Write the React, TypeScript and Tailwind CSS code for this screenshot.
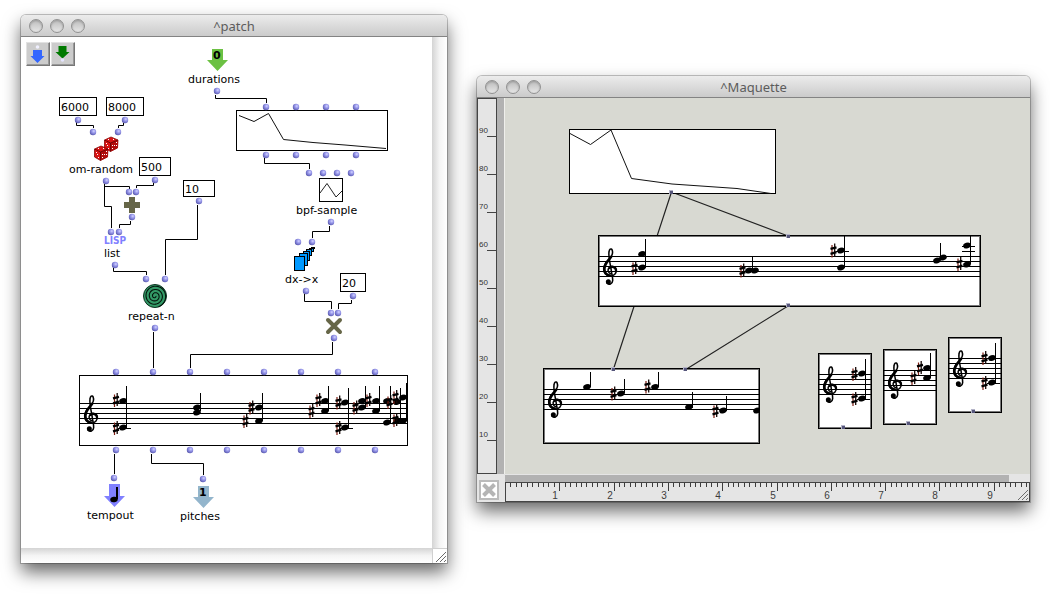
import React from "react";

type Point = [number, number];

/* ---------- Music notation ---------- */

type Chord = {
  x: number;
  heads: number[];
  sharps?: Point[];
  stem: [number, number];
  ledgers?: number[];
  second?: Point;
};

type ScoreBox = {
  x: number;
  y: number;
  w: number;
  h: number;
  staff: number;
  framed?: boolean;
  chords: Chord[];
};

function Clef({ x, y }: { x: number; y: number }) {
  return (
    <g transform={`translate(${x} ${y}) scale(0.3333)`} fill="none" stroke="#000" strokeLinecap="round">
      <path
        strokeWidth="4.6"
        d="M23 77C15 75 13 65 18 59C24 52 38 55 40 65C41 76 33 84 22 84C8 84 2 74 2 63C2 48 13 40 20 32C27 24 31 14 27 5C24 0 19 4 18 12C16 24 21 45 24 62C26 78 30 90 29 98C28 109 18 112 12 105"
      />
      <path strokeWidth="8" d="M24 27C17 37 4 46 4 63C4 73 11 81 20 83" />
      <path strokeWidth="7" d="M20 60C26 54 38 57 39 67" />
      <circle cx="16" cy="101" r="7.5" fill="#000" stroke="none" />
    </g>
  );
}

function Sharp({ x, y }: { x: number; y: number }) {
  return (
    <g transform={`translate(${x} ${y})`} fill="none">
      <path stroke="#7c1c10" strokeWidth="1.2" d="M-1.500 -5.500V7" />
      <path stroke="#140604" strokeWidth="1.3" d="M1.200 -7V6" />
      <path stroke="#000" strokeWidth="2.3" d="M-3 -1.600L3 -3.200M-3 3.300L3 1.700" />
    </g>
  );
}

function Head({ x, y }: { x: number; y: number }) {
  return <ellipse rx="3.9" ry="2.9" transform={`translate(${x} ${y}) rotate(-18)`} />;
}

function Score({ box }: { box: ScoreBox }) {
  const clip = `score-${box.x}-${box.y}`;
  const rows = [0, 5, 10, 15, 20];
  return (
    <g>
      <clipPath id={clip}>
        <rect x={box.x} y={box.y} width={box.w} height={box.h} />
      </clipPath>
      <rect x={box.x} y={box.y} width={box.w} height={box.h} fill="#fff" />
      <g clipPath={`url(#${clip})`}>
        {box.framed && (
          <rect x={box.x + 1.5} y={box.y + 1.5} width={box.w - 3} height={box.h - 3} fill="none" stroke="#777" />
        )}
        {rows.map((r) => (
          <rect key={r} x={box.x} y={box.staff + r} width={box.w} height="1" />
        ))}
        <Clef x={box.x + 5} y={box.staff - 8} />
        {box.chords.map((c, i) => (
          <g key={i}>
            {c.heads.map((y) => (
              <Head key={y} x={c.x} y={y} />
            ))}
            {c.second && <Head x={c.second[0]} y={c.second[1]} />}
            {c.sharps?.map(([x, y]) => (
              <Sharp key={`${x}-${y}`} x={x} y={y} />
            ))}
            <rect x={Math.floor(c.x + 3)} y={c.stem[0]} width="1" height={c.stem[1] - c.stem[0]} />
            {c.ledgers?.map((y) => (
              <rect key={y} x={Math.floor(c.x - 5)} y={y} width="13" height="1" />
            ))}
          </g>
        ))}
      </g>
      <rect x={box.x + 0.5} y={box.y + 0.5} width={box.w - 1} height={box.h - 1} fill="none" stroke="#000" />
    </g>
  );
}

/* ---------- Window chrome ---------- */

function TitleBar({ title }: { title: string }) {
  return (
    <header className="relative flex h-[22px] items-center rounded-t-[5px] border-b border-[#838383] bg-linear-to-b from-[#ececec] to-[#cbcbcb] px-2">
      <div className="flex gap-[7px]">
        {["Close", "Minimize", "Zoom"].map((name) => (
          <button
            key={name}
            type="button"
            aria-label={`${name} ${title}`}
            className="size-[14px] rounded-full border border-[#929292] bg-linear-to-b from-[#bdbdbd] to-[#e6e6e6] shadow-[inset_0_1px_2px_#9a9a9a]"
          />
        ))}
      </div>
      <h2 className="pointer-events-none absolute inset-x-0 text-center font-['Noto_Sans',sans-serif] text-[13px] leading-[20px] text-[#5c5c5c]">
        {title}
      </h2>
    </header>
  );
}

function Grip() {
  return (
    <svg className="size-[14px]" viewBox="0 0 14 14" stroke="#6b6b6b" fill="none" aria-hidden="true">
      <path d="M3 13L13 3M7 13L13 7M11 13L13 11" />
    </svg>
  );
}

const windowClass =
  "rounded-t-[5px] shadow-[0_0_0_1px_rgba(0,0,0,0.22),0_9px_18px_rgba(0,0,0,0.6)]";

/* ---------- Patch window ---------- */

const PATCH: Point = [21, 37];

const wires = [
  "M76.500 122V125.500H93.500V128",
  "M123.500 123V125.500H118.500V128",
  "M104.500 184V206.500H111.500V228",
  "M104.500 186.500H129.500V189",
  "M153.500 183V185.500H136.500V188",
  "M130.500 221V224.500H119.500V228",
  "M197.500 205V239.500H165.500V275",
  "M113.500 268V271.500H146.500V275",
  "M153.500 332V368",
  "M332.500 342V354.500H190.500V368",
  "M304.500 294V301.500H331.500V309",
  "M351.500 300V303.500H338.500V309",
  "M215.500 95V98.500H266.500V103",
  "M264.500 158V163.500H309.500V169",
  "M329.500 226V231.500H312.500V238",
  "M114.500 454V474",
  "M151.500 454V463.500H203.500V475",
];

const scorePortXs = [116, 153, 190, 227, 264, 301, 338, 375];

const ports: Point[] = [
  [78, 120], [125, 120], [93, 132], [118, 132],
  [106, 181], [129, 192], [136, 192], [155, 180], [132, 217],
  [111, 232], [119, 232], [199, 201], [217, 91],
  [266, 107], [296, 107], [326, 107], [356, 107],
  [266, 155], [296, 155], [326, 155], [356, 155],
  [309, 173], [323, 173], [337, 173], [351, 173],
  [331, 222], [298, 242], [312, 242],
  [115, 265], [146, 279], [165, 279], [155, 328],
  [306, 291], [353, 296], [331, 313], [338, 313], [334, 338],
  [114, 478], [203, 479],
  ...scorePortXs.map((x): Point => [x, 372]),
  ...scorePortXs.map((x): Point => [x, 450]),
];

const patchLabels = [
  { text: "durations", x: 188, y: 73 },
  { text: "om-random", x: 69, y: 163 },
  { text: "list", x: 104, y: 247 },
  { text: "repeat-n", x: 128, y: 310 },
  { text: "bpf-sample", x: 296, y: 204 },
  { text: "dx->x", x: 285, y: 273 },
  { text: "tempout", x: 87, y: 509 },
  { text: "pitches", x: 180, y: 510 },
];

const values = [
  { label: "Minimum", value: "6000", x: 59, y: 97, w: 38, h: 19 },
  { label: "Maximum", value: "8000", x: 106, y: 97, w: 38, h: 19 },
  { label: "Offset", value: "500", x: 139, y: 157, w: 32, h: 19 },
  { label: "Repetitions", value: "10", x: 183, y: 180, w: 32, h: 17 },
  { label: "Factor", value: "20", x: 340, y: 273, w: 26, h: 19 },
];

const patchScore: ScoreBox = {
  x: 79, y: 375, w: 329, h: 71, staff: 403,
  chords: [
    { x: 123, heads: [401, 427.5], sharps: [[116, 400], [116, 428]], stem: [386, 428], ledgers: [428] },
    { x: 197, heads: [407.5, 412.5], stem: [393, 411] },
    { x: 259, heads: [407.5, 421], sharps: [[251.5, 407.5], [245.5, 421]], stem: [393, 421] },
    { x: 325, heads: [401, 411], sharps: [[318.5, 400], [311.5, 411]], stem: [386, 411] },
    { x: 345, heads: [402.5, 427.5], sharps: [[338.5, 402.5], [338.5, 428]], stem: [388, 428], ledgers: [428] },
    { x: 362, heads: [401, 407.5], sharps: [[355.5, 407.5]], stem: [386, 408] },
    { x: 376, heads: [401, 411], sharps: [[368.5, 400]], stem: [386, 411] },
    { x: 387, heads: [401, 422.5], sharps: [[389.5, 402]], stem: [386, 423] },
    { x: 397, heads: [402, 421], sharps: [[395.5, 397], [395.5, 420]], stem: [388, 421] },
    { x: 403, heads: [397.5, 421], stem: [383, 421] },
  ],
};

function Die({ x, y }: { x: number; y: number }) {
  return (
    <g transform={`translate(${x} ${y})`}>
      <path fill="#d81414" stroke="#8c0808" strokeWidth="0.8" d="M-6.500 -4L0 -7L7 -4L6.500 4L-0.500 7.500L-6.500 4Z" />
      <path fill="#b00c0c" d="M-0.500 -1L7 -4L6.500 4L-0.500 7.500Z" />
      <path fill="none" stroke="#5a0404" strokeWidth="0.8" d="M-6.500 -4L-0.500 -1L7 -4M-0.500 -1V7.500" />
      <g fill="#fff">
        <rect x="-3" y="-5" width="1" height="1" />
        <rect x="2" y="-5" width="1" height="1" />
        <rect x="-5" y="-1" width="1" height="1" />
        <rect x="-3" y="4" width="1" height="1" />
        <rect x="-4" y="1" width="1" height="1" />
        <rect x="1" y="1" width="1" height="1" />
        <rect x="3" y="1" width="1" height="1" />
        <rect x="5" y="1" width="1" height="1" />
        <rect x="1" y="4" width="1" height="1" />
        <rect x="5" y="-2" width="1" height="1" />
      </g>
    </g>
  );
}

const cards = [
  [311, 247, 3, 1], [309, 248, 4, 3], [306, 249, 5, 6], [303, 251, 6, 9], [299, 253, 8, 12], [294, 256, 10, 14],
];

function spiralPath(cx: number, cy: number) {
  const steps = 110;
  let d = "";
  for (let i = 0; i <= steps; i++) {
    const t = (i / steps) * Math.PI * 2 * 3.2;
    const r = 0.8 + (i / steps) * 10.5;
    d += `${i ? "L" : "M"}${(cx + r * Math.cos(t)).toFixed(1)} ${(cy + r * Math.sin(t)).toFixed(1)}`;
  }
  return d;
}

function PatchDrawing() {
  return (
    <svg className="absolute inset-0 size-full" aria-hidden="true">
      <defs>
        <radialGradient id="port" cx="0.62" cy="0.36" r="0.7">
          <stop offset="0" stopColor="#d4d4ff" />
          <stop offset="0.35" stopColor="#a0a0ee" />
          <stop offset="0.8" stopColor="#6c6cc4" />
          <stop offset="1" stopColor="#5050a0" />
        </radialGradient>
      </defs>
      <g transform={`translate(${-PATCH[0]} ${-PATCH[1]})`}>
        <path d={wires.join("")} fill="none" stroke="#000" />

        <rect x="236.500" y="110.500" width="151" height="40" fill="#fff" stroke="#000" />
        <path d="M239 115.500L254 121.500L268.500 113.500L283.500 139.500L313 142.500L345 145L386 148.500" fill="none" stroke="#111" />

        <rect x="319.500" y="178.500" width="23" height="23" fill="#fff" stroke="#000" />
        <path d="M320 193L327 183.500L336 197L342 191" fill="none" stroke="#222" />

        <path fill="#6cc143" d="M212 49H223V60H228L217.500 71L207 60H212Z" />
        <path fill="#8080ff" d="M109 484H120V496H125L114.500 507L104 496H109Z" />
        <path fill="#93b5cc" d="M198 486H209V497H214L203.500 508L193 497H198Z" />
        <ellipse rx="3.800" ry="2.700" transform="translate(114 499.500) rotate(-12)" />
        <rect x="116" y="487" width="2" height="12" />

        <Die x={111} y={144} />
        <Die x={101} y={153} />

        <path fill="#666648" d="M129 197H135V202H140V208H135V213H129V208H124V202H129Z" />
        <path fill="none" stroke="#666648" strokeWidth="4" strokeLinecap="round" d="M328 320L340 332M340 320L328 332" />

        <circle cx="155" cy="296" r="11.500" fill="#339966" stroke="#0d3020" />
        <path d={spiralPath(155, 296)} fill="none" stroke="#04150c" strokeWidth="1.100" />

        {cards.map(([x, y, w, h]) => (
          <rect key={x} x={x + 0.5} y={y + 0.5} width={w} height={h} fill="#0099ff" stroke="#000" />
        ))}

        <Score box={patchScore} />
        {ports.map(([x, y]) => (
          <circle key={`${x}-${y}`} cx={x} cy={y} r="3.200" fill="url(#port)" />
        ))}
      </g>
    </svg>
  );
}

function PatchWindow() {
  const place = (x: number, y: number) => ({ left: x - PATCH[0], top: y - PATCH[1] });
  const toolClass =
    "flex h-6 w-6 items-center justify-center border border-t-[#e2e2e2] border-r-[#777] border-b-[#777] border-l-[#e2e2e2] bg-[#cccccc] shadow-[inset_-1px_-1px_0_#999]";
  return (
    <section aria-label="^patch" className={`${windowClass} w-[426px] shrink-0 bg-white`}>
      <TitleBar title="^patch" />
      <div className="flex">
        <div className="relative h-[511px] flex-1 overflow-hidden font-['DejaVu_Sans',sans-serif] text-[11px] leading-[14px] text-black">
          <PatchDrawing />
          <div className="relative flex gap-px px-[5px] pt-[5px]">
            <button type="button" aria-label="Add input" className={toolClass}>
              <svg width="22" height="22" viewBox="0 0 22 22" aria-hidden="true">
                <circle cx="10.500" cy="4" r="1.800" fill="#f0f0ff" />
                <path fill="#3366ff" d="M6 7H15V13H17.500L10.500 20L3.500 13H6Z" />
              </svg>
            </button>
            <button type="button" aria-label="Add output" className={toolClass}>
              <svg width="22" height="22" viewBox="0 0 22 22" aria-hidden="true">
                <path fill="#007a00" d="M6.500 3H14.500V9H17.500L10.500 15.500L3.500 9H6.500Z" />
                <circle cx="10.500" cy="17" r="1.800" fill="#e4e4ff" />
              </svg>
            </button>
          </div>
          {patchLabels.map((l) => (
            <span key={l.text} className="absolute whitespace-nowrap" style={place(l.x, l.y)}>
              {l.text}
            </span>
          ))}
          {values.map((v) => (
            <input
              key={v.label}
              aria-label={v.label}
              defaultValue={v.value}
              className="absolute border border-black bg-white pt-[2px] pl-[1px]"
              style={{ ...place(v.x, v.y), width: v.w, height: v.h }}
            />
          ))}
          <span className="absolute font-bold" style={place(213, 49)}>0</span>
          <span className="absolute font-bold" style={place(199, 486)}>1</span>
          <span
            className="absolute font-['DejaVu_Sans_Condensed','DejaVu_Sans',sans-serif] text-[10px] leading-[10px] font-bold text-[#8080ff]"
            style={place(104, 236)}
          >
            LISP
          </span>
        </div>
        <div className="w-[15px] bg-linear-to-r from-[#d4d4d4] via-[#f4f4f4] to-white" />
      </div>
      <div className="flex h-[15px]">
        <div className="flex-1 bg-linear-to-b from-[#d4d4d4] via-[#f4f4f4] to-white" />
        <div className="w-[15px] border-t border-l border-[#d0d0d0] bg-white">
          <Grip />
        </div>
      </div>
    </section>
  );
}

/* ---------- Maquette window ---------- */

const MAQUETTE: Point = [504, 98];

const maquetteScores: ScoreBox[] = [
  {
    x: 598, y: 235, w: 383, h: 72, staff: 256, framed: true,
    chords: [
      { x: 642, heads: [254, 267.5], sharps: [[634.5, 268]], stem: [239, 268] },
      { x: 749, heads: [270.5], second: [755, 270.5], sharps: [[742.5, 270.5]], stem: [257, 271] },
      { x: 841, heads: [250.5, 267.5], sharps: [[833.5, 250.5]], stem: [236, 268], ledgers: [251] },
      { x: 937, heads: [260.5], second: [943, 257.5], stem: [243, 260] },
      { x: 967, heads: [245.5, 264.5], sharps: [[959.5, 264]], stem: [236, 264], ledgers: [246, 251] },
    ],
  },
  {
    x: 543, y: 368, w: 217, h: 76, staff: 389, framed: true,
    chords: [
      { x: 587, heads: [387], stem: [372, 387] },
      { x: 621, heads: [393.5], sharps: [[613.5, 393.5]], stem: [379, 393] },
      { x: 655, heads: [387], sharps: [[647.5, 386.5]], stem: [372, 387] },
      { x: 689, heads: [407], stem: [392, 408] },
      { x: 723, heads: [410.5], sharps: [[715.5, 411]], stem: [396, 411] },
      { x: 757, heads: [410.5], stem: [410, 411] },
    ],
  },
  {
    x: 818, y: 353, w: 54, h: 76, staff: 374, framed: true,
    chords: [{ x: 862, heads: [373.5, 398.5], sharps: [[854.5, 374], [854.5, 399]], stem: [359, 399], ledgers: [399] }],
  },
  {
    x: 883, y: 349, w: 54, h: 76, staff: 370, framed: true,
    chords: [{ x: 927, heads: [368, 378], sharps: [[920, 368], [913.5, 378]], stem: [353, 378] }],
  },
  {
    x: 948, y: 337, w: 54, h: 76, staff: 358, framed: true,
    chords: [{ x: 992, heads: [358, 382.5], sharps: [[984.5, 358], [984.5, 383]], stem: [343, 383], ledgers: [383] }],
  },
];

const maquettePorts: Point[] = [
  [671, 192], [788, 236], [788, 305], [613, 369], [685, 369], [843, 427], [908, 423], [973, 411],
];

function MaquetteDrawing() {
  return (
    <svg className="absolute inset-0 size-full" role="img" aria-label="Maquette canvas">
      <g transform={`translate(${-MAQUETTE[0]} ${-MAQUETTE[1]})`}>
        <path d="M671.500 192L613.500 369M671.500 192L788 236M788 306L685 370" fill="none" stroke="#222" strokeWidth="1.200" />
        <rect x="569.500" y="129.500" width="206" height="64" fill="#fff" stroke="#000" />
        <path d="M570 133.500L590.500 144.500L611 130L631.500 178.500L672 184L737 188.500L771 193.500" fill="none" stroke="#111" />
        {maquetteScores.map((s) => (
          <Score key={s.x} box={s} />
        ))}
        {maquettePorts.map(([x, y]) => (
          <g key={`${x}-${y}`}>
            <rect x={x - 2} y={y - 2} width="4" height="4" fill="#b4b4c8" />
            <rect x={x - 1} y={y - 1} width="3" height="3" fill="#55557a" />
          </g>
        ))}
      </g>
    </svg>
  );
}

function VerticalRuler() {
  const marks = [90, 80, 70, 60, 50, 40, 30, 20, 10];
  return (
    <div className="flex w-5 flex-col border border-[#444] bg-[#e5e5e5] font-['Liberation_Sans',sans-serif] text-[8px] leading-[8px] text-[#333]">
      {marks.map((m) => (
        <div key={m} className="flex h-[38px] flex-col justify-end">
          <span className="pl-[1px]">{m}</span>
          <span className="ml-[9px] h-[2px] border-b border-[#444]" />
        </div>
      ))}
    </div>
  );
}

function HorizontalRuler() {
  const lastLabel = 9;
  const ticks = Array.from({ length: 300 }, (_, i) => i + 1);
  return (
    <div className="relative h-5 overflow-hidden border border-[#444] bg-[#e5e5e5]">
      <svg className="block h-[18px] w-full font-['Liberation_Sans',sans-serif] text-[10px]" aria-label="Time ruler" role="img">
        {ticks.map((t) => {
          const x = Math.round(t * 5.43) - 1;
          const major = t % 10 === 0;
          return (
            <g key={t} fill="#3c3c3c">
              <rect x={x} y="0" width="1" height={major ? 8 : 4} />
              {major && t / 10 <= lastLabel && (
                <text x={x - 4} y="16" textAnchor="middle">
                  {t / 10}
                </text>
              )}
            </g>
          );
        })}
      </svg>
      <div className="absolute right-0 bottom-0">
        <Grip />
      </div>
    </div>
  );
}

function MaquetteWindow() {
  return (
    <section aria-label="^Maquette" className={`${windowClass} mt-[61px] min-w-0 flex-1 bg-[#e5e5e5]`}>
      <TitleBar title="^Maquette" />
      <div className="flex">
        <div className="flex w-[27px] shrink-0 flex-col">
          <div className="flex h-[376px]">
            <VerticalRuler />
            <div className="flex-1 bg-[#b2b2b2]" />
          </div>
          <div className="flex h-7 items-end p-[2px]">
            <button
              type="button"
              aria-label="Close ruler"
              className="flex size-5 items-center justify-center border-2 border-[#bbb] bg-white"
            >
              <svg className="size-4" viewBox="0 0 16 16" fill="none" stroke="#b5b5b5" strokeWidth="4" aria-hidden="true">
                <path d="M2.500 2.500L13.500 13.500M13.500 2.500L2.500 13.500" />
              </svg>
            </button>
          </div>
        </div>
        <div className="min-w-0 flex-1">
          <div className="relative h-[376px] overflow-hidden border-l border-[#efefec] bg-[#d8d9d2]">
            <div className="absolute inset-y-0 right-0 -left-px">
              <MaquetteDrawing />
            </div>
          </div>
          <div className="mt-px ml-px mr-[21px] h-[7px] bg-[#b2b2b2]" />
          <div className="ml-px">
            <HorizontalRuler />
          </div>
        </div>
      </div>
    </section>
  );
}

export default function App() {
  return (
    <main className="flex min-h-screen items-start gap-[30px] overflow-hidden bg-white pt-[15px] pr-5 pb-8 pl-[21px]">
      <PatchWindow />
      <MaquetteWindow />
    </main>
  );
}
